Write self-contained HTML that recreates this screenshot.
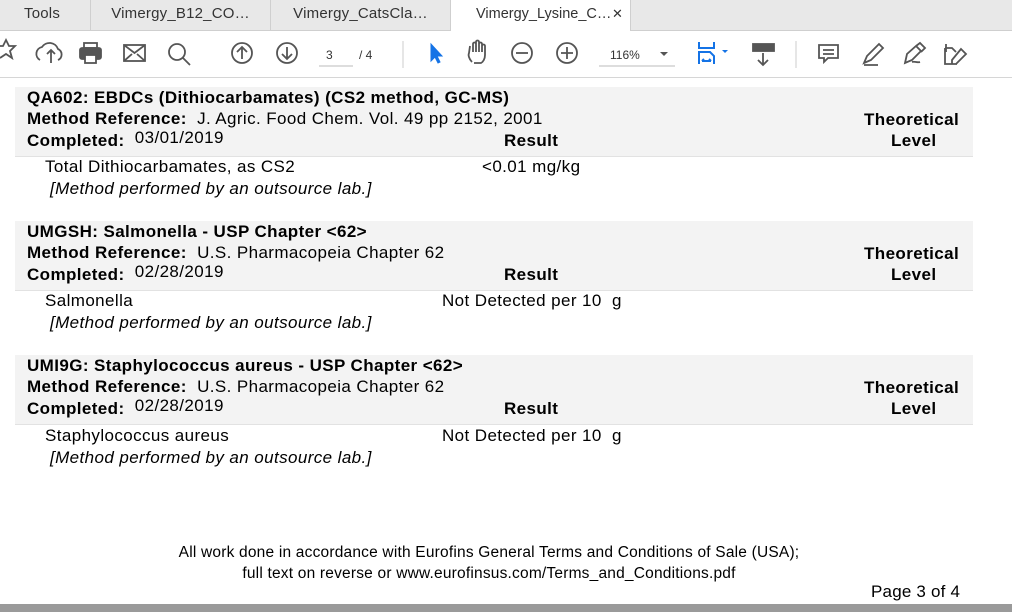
<!DOCTYPE html>
<html><head><meta charset="utf-8"><style>
*{margin:0;padding:0;box-sizing:border-box}
body{width:1012px;height:612px;overflow:hidden;background:#fff;font-family:"Liberation Sans",Arial,sans-serif;position:relative;color:#000}
.a{position:absolute;white-space:nowrap}
.tabs{position:absolute;left:0;top:0;width:1012px;height:31px;background:#e8e8e8;border-bottom:1px solid #cfcfcf}
.tab{position:absolute;top:0;height:31px;font-size:15px;letter-spacing:0.2px;color:#333;line-height:28px;text-align:center;border-right:1px solid #cfcfcf;white-space:nowrap}
.tb{position:absolute;left:0;top:31px;width:1012px;height:47px;border-bottom:1px solid #d6d6d6;background:#fff}
.band{position:absolute;left:15px;width:958px;height:70px;background:#f3f3f3;border-bottom:1px solid #e2e2e2}
.t{font-size:17px;line-height:20px;letter-spacing:0.4px}
b{font-weight:bold}
svg{position:absolute}
</style></head><body>
<div class="tabs">
<div class="tab" style="left:0;width:91px;text-align:left;padding-left:24px">Tools</div>
<div class="tab" style="left:91px;width:180px">Vimergy_B12_CO…</div>
<div class="tab" style="left:271px;width:180px">Vimergy_CatsCla…</div>
<div class="tab" style="left:451px;width:180px;background:#fff;height:32px;text-align:left;padding-left:25px;font-size:14.5px;letter-spacing:0">Vimergy_Lysine_C…</div>
<div class="a" style="left:612px;top:6px;font-size:13px;color:#333">✕</div>
</div>
<div class="tb">
<svg width="1012" height="47" viewBox="0 31 1012 47" fill="none" stroke="#555" stroke-width="1.8">
<path d="M-2 46 L3 46 L6 40 L9 46 L15 46 L10 51 L12 58 L6 54 L0 58"/>
<path d="M40 60 a7 7 0 0 1 2-13 a9 9 0 0 1 16 2 a6 6 0 0 1 0 11 M47 54 l4-4 4 4 M51 50 v13"/>
<rect x="80" y="48" width="21" height="11" rx="2" fill="#555"/><rect x="84" y="43" width="13" height="5"/><rect x="85" y="55" width="11" height="8" fill="#fff"/>
<rect x="124" y="45" width="21" height="16"/><path d="M124 45 l10.5 8 10.5-8 M124 61 l8-7 M145 61 l-8-7"/>
<circle cx="177" cy="52" r="8"/><path d="M183 58 l7 7"/>
<circle cx="242" cy="53" r="10"/><path d="M242 59 v-11 M237 52 l5-5 5 5"/>
<circle cx="287" cy="53" r="10"/><path d="M287 47 v11 M282 54 l5 5 5-5"/>
<path d="M319 66 h34" stroke="#bbb" stroke-width="1"/>
<path d="M403 41 v27" stroke="#ccc" stroke-width="1"/>
<path d="M431 44 v17 l4-4 3 6 2-1 -3-6 5 0z" fill="#1473e6" stroke="#1473e6" stroke-width="1"/>
<path d="M472 62 c-3-3-4-7-3-9 l1-7 M473 52 v-8 a1.5 1.5 0 0 1 3 0 v8 M476 44 v-2 a1.5 1.5 0 0 1 3 0 v10 M479 44 a1.5 1.5 0 0 1 3 0 v8 M482 46 a1.5 1.5 0 0 1 3 0 v9 c0 4-2 7-4 8 h-7"/>
<circle cx="522" cy="53" r="10"/><path d="M516 53 h12"/>
<circle cx="567" cy="53" r="10"/><path d="M561 53 h12 M567 47 v12"/>
<path d="M599 66 h76" stroke="#bbb" stroke-width="1"/>
<path d="M660 52 l4 4 4-4z" fill="#555" stroke="none"/>
<path d="M699 42 v6 h15 v-6 M699 64 v-12 h11 l4 4 v8 M702 61 h9 M702 61 l2-2 M711 61 l-2-2" stroke="#1473e6" stroke-width="2"/>
<path d="M722 50 l3 3 3-3z" fill="#1473e6" stroke="none"/>
<rect x="753" y="44" width="21" height="7" fill="#555"/><path d="M763 53 v11 M758 60 l5 5 5-5"/>
<path d="M796 41 v27" stroke="#ccc" stroke-width="1"/>
<path d="M819 45 h19 v13 h-10 l-4 4 v-4 h-5z M823 50 h11 M823 54 h11"/>
<path d="M864 63 l3-7 12-12 4 4-12 12z M864 65 h14" />
<path d="M905 63 l2-9 9-8 5 5-9 9z M916 46 l4-3 5 5-4 4 M912 62 c3-1 5 1 8 0"/>
<path d="M945 48 h7 l4 4 M945 48 v16 h12 M946 44 v8 M961 49 l5 5 -10 10 h-4 v-4z"/>
</svg>
<div class="a" style="left:326px;top:17px;font-size:12px;color:#333">3</div>
<div class="a" style="left:359px;top:17px;font-size:12px;color:#333">/ 4</div>
<div class="a" style="left:610px;top:17px;font-size:12px;color:#333">116%</div>
</div>

<div class="band" style="top:87px"></div>
<div class="band" style="top:221px"></div>
<div class="band" style="top:355px"></div>

<div class="a t" style="left:27px;top:88px"><b>QA602: EBDCs (Dithiocarbamates) (CS2 method, GC-MS)</b></div>
<div class="a t" style="left:27px;top:109px"><b>Method Reference:</b>&nbsp; J. Agric. Food Chem. Vol. 49 pp 2152, 2001</div>
<div class="a t" style="left:27px;top:131px"><b>Completed:</b>&nbsp; <span style="position:relative;top:-3px">03/01/2019</span></div>
<div class="a t" style="left:504px;top:131px"><b>Result</b></div>
<div class="a t" style="left:864px;top:110px"><b>Theoretical</b></div>
<div class="a t" style="left:891px;top:131px"><b>Level</b></div>
<div class="a t" style="left:45px;top:157px">Total Dithiocarbamates, as CS2</div>
<div class="a t" style="left:482px;top:157px">&lt;0.01 mg/kg</div>
<div class="a t" style="left:50px;top:179px"><i>[Method performed by an outsource lab.]</i></div>

<div class="a t" style="left:27px;top:222px"><b>UMGSH: Salmonella - USP Chapter &lt;62&gt;</b></div>
<div class="a t" style="left:27px;top:243px"><b>Method Reference:</b>&nbsp; U.S. Pharmacopeia Chapter 62</div>
<div class="a t" style="left:27px;top:265px"><b>Completed:</b>&nbsp; <span style="position:relative;top:-3px">02/28/2019</span></div>
<div class="a t" style="left:504px;top:265px"><b>Result</b></div>
<div class="a t" style="left:864px;top:244px"><b>Theoretical</b></div>
<div class="a t" style="left:891px;top:265px"><b>Level</b></div>
<div class="a t" style="left:45px;top:291px">Salmonella</div>
<div class="a t" style="left:442px;top:291px">Not Detected per 10&nbsp; g</div>
<div class="a t" style="left:50px;top:313px"><i>[Method performed by an outsource lab.]</i></div>

<div class="a t" style="left:27px;top:356px"><b>UMI9G: Staphylococcus aureus - USP Chapter &lt;62&gt;</b></div>
<div class="a t" style="left:27px;top:377px"><b>Method Reference:</b>&nbsp; U.S. Pharmacopeia Chapter 62</div>
<div class="a t" style="left:27px;top:399px"><b>Completed:</b>&nbsp; <span style="position:relative;top:-3px">02/28/2019</span></div>
<div class="a t" style="left:504px;top:399px"><b>Result</b></div>
<div class="a t" style="left:864px;top:378px"><b>Theoretical</b></div>
<div class="a t" style="left:891px;top:399px"><b>Level</b></div>
<div class="a t" style="left:45px;top:426px">Staphylococcus aureus</div>
<div class="a t" style="left:442px;top:426px">Not Detected per 10&nbsp; g</div>
<div class="a t" style="left:50px;top:448px"><i>[Method performed by an outsource lab.]</i></div>

<div class="a" style="left:0;width:978px;text-align:center;top:542px;font-size:15.5px;letter-spacing:0.2px;line-height:21px">All work done in accordance with Eurofins General Terms and Conditions of Sale (USA);<br>full text on reverse or www.eurofinsus.com/Terms_and_Conditions.pdf</div>
<div class="a t" style="left:871px;top:582px;font-size:17px;letter-spacing:0.2px">Page 3 of 4</div>
<div class="a" style="left:0;top:604px;width:1012px;height:8px;background:#9a9a9a"></div>
</body></html>
